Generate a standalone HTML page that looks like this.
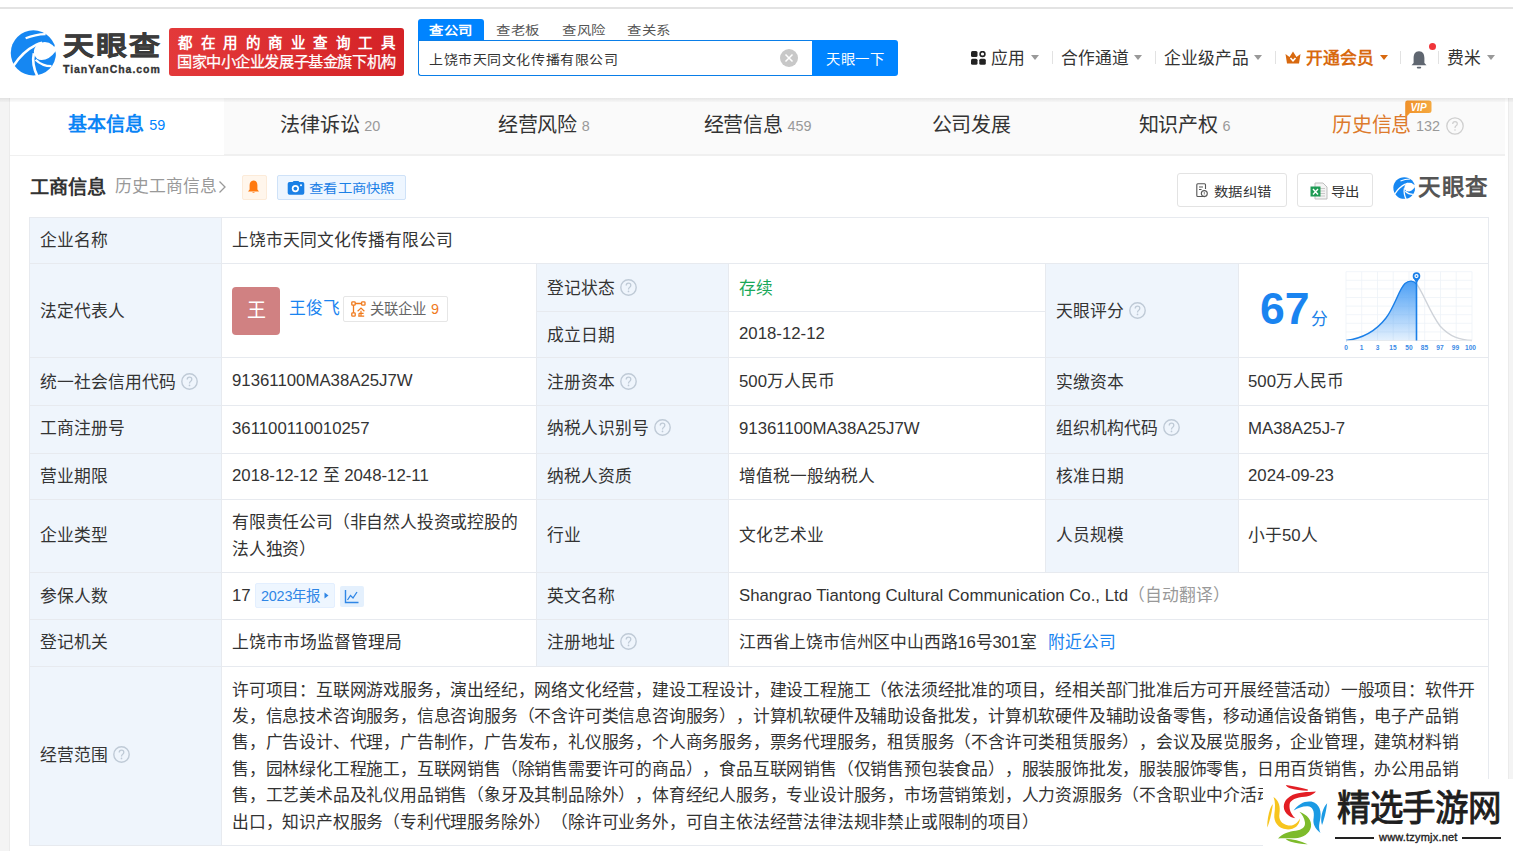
<!DOCTYPE html>
<html lang="zh-CN"><head><meta charset="utf-8">
<style>
*{box-sizing:border-box;margin:0;padding:0}
html,body{text-spacing-trim:space-all;width:1513px;height:851px;overflow:hidden;background:#f4f4f4;font-family:"Liberation Sans",sans-serif;color:#333}
.a{position:absolute;white-space:nowrap}
#top{position:absolute;left:0;top:0;width:1513px;height:98px;background:#fff}
#topline{position:absolute;left:0;top:7px;width:1513px;height:2px;background:#e3e3e3}
#shadow{position:absolute;left:0;top:98px;width:1513px;height:4px;z-index:5;background:linear-gradient(rgba(0,0,0,0.08),rgba(0,0,0,0.015))}
#card{position:absolute;left:10px;top:98px;width:1498px;height:760px;background:#fff}
#tabs{position:absolute;left:10px;top:98px;width:1495px;height:57px;background:#fafafa;border-bottom:1px solid #f0f0f0}
.tab{position:absolute;top:0;height:57px;width:213.6px;text-align:center;font-size:20px;letter-spacing:-0.3px;line-height:54px;color:#333}
.tab small{font-size:14.4px;color:#999;margin-left:5px;letter-spacing:0;position:relative;top:-1.5px}
.c{font-size:16.8px;color:#333}
.sc{font-size:16.8px;line-height:26.4px;color:#333;letter-spacing:-0.2px}
.nav{top:48px;font-size:16.8px;line-height:22px;color:#333}
.caret{top:55px;width:0;height:0;border-left:4.5px solid transparent;border-right:4.5px solid transparent;border-top:5px solid #999}
.sep{top:51px;width:1px;height:13px;background:#e2e2e2}
.q{display:inline-block;vertical-align:middle;margin-left:5.4px;position:relative;top:-2px}
</style></head><body>
<div id="top"></div>
<div id="topline"></div>
<div id="card"></div>

<!-- header -->
<svg class="a" style="left:8px;top:28px" width="52" height="50" viewBox="0 0 885 851">
  <circle cx="432" cy="425" r="385" fill="#1687f2"/>
  <ellipse cx="625" cy="405" rx="185" ry="165" fill="#fff"/>
  <path d="M770 320 L900 285 L900 425 L805 425 Z" fill="#fff"/>
  <path d="M470 520 Q650 610 812 395 Q810 570 690 625 Q570 665 470 520 Z" fill="#1687f2"/>
  <path d="M95 640 Q250 400 470 290 Q520 262 580 250" stroke="#fff" stroke-width="44" fill="none"/>
  <path d="M300 175 Q460 110 640 105" stroke="#fff" stroke-width="36" fill="none"/>
  <path d="M440 430 Q400 620 500 820" stroke="#fff" stroke-width="44" fill="none"/>
  <path d="M470 540 Q580 650 740 650" stroke="#fff" stroke-width="40" fill="none"/>
</svg>
<div class="a" style="left:63px;top:26px;font-size:31px;line-height:36px;font-weight:bold;color:#3b3b3b;letter-spacing:2px;transform:scaleY(0.83);-webkit-text-stroke:0.7px #3b3b3b;transform-origin:0 100%">天眼查</div>
<div class="a" style="left:63px;top:63px;font-size:10.5px;line-height:13px;font-weight:bold;color:#333;letter-spacing:0.95px;-webkit-text-stroke:0.3px #333">TianYanCha.com</div>
<div class="a" style="left:169px;top:28px;width:235px;height:48px;border-radius:3px;background:linear-gradient(90deg,#e3393a,#d42226)"></div>
<div class="a" style="left:178px;top:34px;font-size:14.5px;line-height:19px;font-weight:bold;color:#fff;letter-spacing:8.5px">都在用的商业查询工具</div>
<div class="a" style="left:177px;top:52px;font-size:15.2px;line-height:19px;color:#fff;letter-spacing:-0.42px;-webkit-text-stroke:0.25px #fff">国家中小企业发展子基金旗下机构</div>
<!-- search -->
<div class="a" style="left:418px;top:19px;width:66px;height:22px;background:#0084ff;border-radius:3px 3px 0 0"></div>
<div class="a" style="left:429px;top:19.5px;font-size:14.4px;line-height:21px;letter-spacing:0.5px;font-weight:bold;color:#fff;transform:scaleY(0.85);transform-origin:0 70%">查公司</div>
<div class="a" style="left:496px;top:19.5px;font-size:14.4px;line-height:21px;letter-spacing:0.5px;color:#555;transform:scaleY(0.85);transform-origin:0 70%">查老板</div>
<div class="a" style="left:562px;top:19.5px;font-size:14.4px;line-height:21px;letter-spacing:0.5px;color:#555;transform:scaleY(0.85);transform-origin:0 70%">查风险</div>
<div class="a" style="left:627px;top:19.5px;font-size:14.4px;line-height:21px;letter-spacing:0.5px;color:#555;transform:scaleY(0.85);transform-origin:0 70%">查关系</div>
<div class="a" style="left:418px;top:40px;width:400px;height:36px;border:1px solid #0a7ee8;border-right:none;border-radius:0 0 0 3px;background:#fff"></div>
<div class="a" style="left:429px;top:40.5px;font-size:14px;line-height:36px;color:#333;letter-spacing:0.58px;transform:scaleY(0.9);transform-origin:0 60%">上饶市天同文化传播有限公司</div>
<div class="a" style="left:780px;top:49px;width:18px;height:18px;border-radius:50%;background:#c8c8c8"></div>
<svg class="a" style="left:780px;top:49px" width="18" height="18" viewBox="0 0 18 18"><path d="M5.5 5.5L12.5 12.5M12.5 5.5L5.5 12.5" stroke="#fff" stroke-width="1.5"/></svg>
<div class="a" style="left:812px;top:40px;width:86px;height:36px;background:#0084ff;border-radius:0 3px 3px 0"></div><div class="a" style="left:826px;top:41px;font-size:14.4px;line-height:36px;color:#fff;letter-spacing:0.6px;transform:scaleY(0.92);transform-origin:0 60%">天眼一下</div>
<!-- right nav -->
<svg class="a" style="left:971px;top:51px" width="15" height="14" viewBox="0 0 15 14">
  <rect x="0" y="0" width="6.5" height="6" rx="1.5" fill="#222"/>
  <circle cx="11.5" cy="3" r="2.4" fill="none" stroke="#222" stroke-width="1.6"/>
  <rect x="0" y="7.8" width="6.5" height="6" rx="1.5" fill="#222"/>
  <rect x="8.3" y="7.8" width="6.5" height="6" rx="1.5" fill="#222"/>
</svg>
<div class="a nav" style="left:991px">应用</div>
<div class="a caret" style="left:1031px"></div>
<div class="a sep" style="left:1052px"></div>
<div class="a nav" style="left:1061px">合作通道</div>
<div class="a caret" style="left:1134px"></div>
<div class="a sep" style="left:1155px"></div>
<div class="a nav" style="left:1164px">企业级产品</div>
<div class="a caret" style="left:1254px"></div>
<div class="a sep" style="left:1275px"></div>
<svg class="a" style="left:1285px;top:51px" width="16" height="13" viewBox="0 0 16 13">
  <path d="M0.5 3 L4.5 6 L8 0.5 L11.5 6 L15.5 3 L14 12.5 L2 12.5 Z" fill="#d8690f"/>
  <path d="M5.5 7 L8 9.8 L10.5 7" stroke="#fff" stroke-width="1.6" fill="none"/>
</svg>
<div class="a nav" style="left:1306px;color:#d8690f;font-weight:bold">开通会员</div>
<div class="a caret" style="left:1380px;border-top-color:#d8690f"></div>
<div class="a sep" style="left:1400px"></div>
<svg class="a" style="left:1410px;top:50px" width="18" height="19" viewBox="0 0 18 19">
  <path d="M9 1.2 C5 1.2 3.6 4.5 3.6 8 L3.6 13 L1.5 15.2 L16.5 15.2 L14.4 13 L14.4 8 C14.4 4.5 13 1.2 9 1.2 Z" fill="#5f6670"/>
  <rect x="6.8" y="16.8" width="4.4" height="1.6" rx="0.8" fill="#5f6670"/>
</svg>
<div class="a" style="left:1429px;top:43px;width:7px;height:7px;border-radius:50%;background:#f0353a"></div>
<div class="a sep" style="left:1438px"></div>
<div class="a nav" style="left:1447px">费米</div>
<div class="a caret" style="left:1487px"></div>

<div id="shadow"></div>
<div class="a" style="left:10px;top:155px;width:1495px;height:1px;background:#f0f0f0;z-index:4"></div>
<div class="a" style="left:9px;top:98px;width:1px;height:753px;background:#ebebeb"></div>
<div class="a" style="left:1508px;top:98px;width:1px;height:753px;background:#ebebeb"></div>
<div id="tabs">
  <div class="tab" style="left:0;background:#fff;color:#0a84f5;font-weight:bold;font-size:19px;letter-spacing:0">基本信息<small style="color:#0084ff;font-weight:normal">59</small></div>
  <div class="tab" style="left:213.6px">法律诉讼<small>20</small></div>
  <div class="tab" style="left:427.1px">经营风险<small>8</small></div>
  <div class="tab" style="left:640.7px">经营信息<small>459</small></div>
  <div class="tab" style="left:854.3px">公司发展</div>
  <div class="tab" style="left:1067.9px">知识产权<small>6</small></div>
  <div class="tab" style="left:1281.4px;color:#dd7a2c">历史信息<small>132</small><svg style="display:inline-block;vertical-align:middle;margin-left:6px;position:relative;top:-1px" width="18" height="18" viewBox="0 0 18 18"><circle cx="9" cy="9" r="8.2" fill="none" stroke="#cfcfcf" stroke-width="1.3"/><path d="M6.7 7 Q6.7 4.6 9 4.6 Q11.3 4.6 11.3 6.7 Q11.3 8 10.1 8.7 Q9 9.4 9 10.9" fill="none" stroke="#cfcfcf" stroke-width="1.2"/><circle cx="9" cy="13" r="0.8" fill="#cfcfcf"/></svg></div>
</div>

<!-- table -->

<svg class="a" style="left:1404px;top:100px" width="28" height="19" viewBox="0 0 28 19">
  <defs><linearGradient id="vg" x1="0" y1="0" x2="1" y2="0"><stop offset="0" stop-color="#f0912a"/><stop offset="1" stop-color="#f5a940"/></linearGradient></defs>
  <path d="M3 0.5 L25 0.5 Q27.5 0.5 27.5 3 L27.5 11 Q27.5 13 25 13 L6 13 L1.2 18 L1.2 3 Q1.2 0.5 3 0.5 Z" fill="url(#vg)"/>
  <text x="14.5" y="10.6" font-family="Liberation Sans" font-size="10" font-weight="bold" font-style="italic" fill="#fff" text-anchor="middle">VIP</text>
</svg>
<!-- section header -->
<div class="a" style="left:30px;top:175px;font-size:19.2px;line-height:26px;font-weight:bold;color:#333">工商信息</div>
<div class="a" style="left:115px;top:174px;font-size:16.8px;line-height:26px;color:#999">历史工商信息</div>
<svg class="a" style="left:218px;top:180px" width="9" height="14" viewBox="0 0 9 14"><path d="M1.5 1.5L7 7L1.5 12.5" stroke="#999" stroke-width="1.3" fill="none"/></svg>
<div class="a" style="left:242px;top:175px;width:25px;height:25px;background:#fff6ec;border:1px solid #fcebd9;border-radius:2px"></div>
<svg class="a" style="left:247px;top:180px" width="13" height="14" viewBox="0 0 13 14">
  <path d="M6.5 0.4 C3.8 0.4 2.6 2.6 2.6 5.2 L2.6 9.6 L1 11.4 L12 11.4 L10.4 9.6 L10.4 5.2 C10.4 2.6 9.2 0.4 6.5 0.4 Z" fill="#ff7a10"/>
  <path d="M5 12 Q6.5 13.6 8 12 Z" fill="#ff7a10"/>
</svg>
<div class="a" style="left:277px;top:175px;width:129px;height:25px;background:#eef6ff;border:1px solid #cfe2f8;border-radius:2px"></div>
<svg class="a" style="left:287px;top:180px" width="18" height="16" viewBox="0 0 18 16">
  <path d="M2.5 2 L5.6 2 L6.6 0.9 L11.4 0.9 L12.4 2 L15.5 2 Q17.3 2 17.3 3.8 L17.3 13 Q17.3 14.8 15.5 14.8 L2.5 14.8 Q0.7 14.8 0.7 13 L0.7 3.8 Q0.7 2 2.5 2 Z" fill="#1a80e6"/>
  <circle cx="8.4" cy="8.6" r="3.6" fill="#fff"/>
  <circle cx="8.4" cy="8.6" r="1.9" fill="#1a80e6"/>
  <circle cx="14" cy="5.3" r="1" fill="#fff"/>
</svg>
<div class="a" style="left:309px;top:176px;font-size:14.4px;line-height:25px;color:#1a80e6;letter-spacing:0.3px;transform:scaleY(0.86);transform-origin:0 70%">查看工商快照</div>
<div class="a" style="left:1177px;top:173px;width:110px;height:34px;border:1px solid #e3e3e3;border-radius:3px;background:#fff"></div>
<svg class="a" style="left:1196px;top:183px" width="12" height="15" viewBox="0 0 12 15">
  <path d="M8.5 13.5 L1.8 13.5 Q0.8 13.5 0.8 12.5 L0.8 1.8 Q0.8 0.8 1.8 0.8 L8.5 0.8 Q9.5 0.8 9.5 1.8 L9.5 6" stroke="#555" stroke-width="1.1" fill="none"/>
  <path d="M3 4 L7 4 M3 6.5 L5.5 6.5" stroke="#555" stroke-width="1.1"/>
  <circle cx="8.3" cy="10.6" r="3" stroke="#555" stroke-width="1.1" fill="#fff"/>
  <path d="M8.3 9.2 L8.3 10.8 M8.3 11.6 L8.3 12.2" stroke="#555" stroke-width="0.9"/>
</svg>
<div class="a" style="left:1214px;top:174px;font-size:14.4px;line-height:34px;color:#333;letter-spacing:0.3px;transform:scaleY(0.9);transform-origin:0 60%">数据纠错</div>
<div class="a" style="left:1297px;top:173px;width:76px;height:34px;border:1px solid #e3e3e3;border-radius:3px;background:#fff"></div>
<svg class="a" style="left:1310px;top:182px" width="18" height="18" viewBox="0 0 18 18">
  <path d="M5 1 L13 1 L17 5 L17 17 L5 17 Z" fill="#f4f4f4" stroke="#bdbdbd" stroke-width="1"/>
  <path d="M9 6.5 L15 6.5 M9 9 L15 9 M9 11.5 L15 11.5 M9 14 L15 14" stroke="#c8c8c8" stroke-width="1"/>
  <rect x="0.5" y="4.5" width="10" height="10" fill="#1e9b54"/>
  <path d="M3 7 L8 12.5 M8 7 L3 12.5" stroke="#fff" stroke-width="1.4"/>
</svg>
<div class="a" style="left:1331px;top:174px;font-size:14.4px;line-height:34px;color:#333;letter-spacing:0.3px;transform:scaleY(0.9);transform-origin:0 60%">导出</div>
<svg class="a" style="left:1392px;top:176px" width="25" height="24" viewBox="0 0 885 851">
  <circle cx="432" cy="425" r="385" fill="#1687f2"/>
  <ellipse cx="625" cy="405" rx="185" ry="165" fill="#fff"/>
  <path d="M770 320 L900 285 L900 425 L805 425 Z" fill="#fff"/>
  <path d="M470 520 Q650 610 812 395 Q810 570 690 625 Q570 665 470 520 Z" fill="#1687f2"/>
  <path d="M95 640 Q250 400 470 290 Q520 262 580 250" stroke="#fff" stroke-width="44" fill="none"/>
  <path d="M300 175 Q460 110 640 105" stroke="#fff" stroke-width="36" fill="none"/>
  <path d="M440 430 Q400 620 500 820" stroke="#fff" stroke-width="44" fill="none"/>
  <path d="M470 540 Q580 650 740 650" stroke="#fff" stroke-width="40" fill="none"/>
</svg>
<div class="a" style="left:1418px;top:174px;font-size:22.5px;line-height:28px;font-weight:bold;color:#555;letter-spacing:0.5px">天眼查</div>
<div id="grid">
<div class="a" style="left:29px;top:217px;width:192px;height:629px;background:#eff5fc"></div>
<div class="a" style="left:536px;top:263px;width:192px;height:403px;background:#eff5fc"></div>
<div class="a" style="left:1045px;top:263px;width:193px;height:309px;background:#eff5fc"></div>
<div class="a" style="left:29px;top:217px;width:1460px;height:1px;background:#e7eaef"></div>
<div class="a" style="left:29px;top:263px;width:1460px;height:1px;background:#e7eaef"></div>
<div class="a" style="left:29px;top:357px;width:1460px;height:1px;background:#e7eaef"></div>
<div class="a" style="left:29px;top:405px;width:1460px;height:1px;background:#e7eaef"></div>
<div class="a" style="left:29px;top:453px;width:1460px;height:1px;background:#e7eaef"></div>
<div class="a" style="left:29px;top:499px;width:1460px;height:1px;background:#e7eaef"></div>
<div class="a" style="left:29px;top:572px;width:1460px;height:1px;background:#e7eaef"></div>
<div class="a" style="left:29px;top:619px;width:1460px;height:1px;background:#e7eaef"></div>
<div class="a" style="left:29px;top:666px;width:1460px;height:1px;background:#e7eaef"></div>
<div class="a" style="left:29px;top:845px;width:1460px;height:1px;background:#e7eaef"></div>
<div class="a" style="left:536px;top:311px;width:510px;height:1px;background:#e7eaef"></div>
<div class="a" style="left:29px;top:217px;width:1px;height:629px;background:#e7eaef"></div>
<div class="a" style="left:221px;top:217px;width:1px;height:629px;background:#e7eaef"></div>
<div class="a" style="left:1488px;top:217px;width:1px;height:629px;background:#e7eaef"></div>
<div class="a" style="left:536px;top:263px;width:1px;height:404px;background:#e7eaef"></div>
<div class="a" style="left:728px;top:263px;width:1px;height:404px;background:#e7eaef"></div>
<div class="a" style="left:1045px;top:263px;width:1px;height:310px;background:#e7eaef"></div>
<div class="a" style="left:1238px;top:263px;width:1px;height:310px;background:#e7eaef"></div>
</div>
<div id="cells">
<div class="a c" style="left:40px;top:217.5px;height:46px;line-height:46px;">企业名称</div>
<div class="a c" style="left:40px;top:264.5px;height:94px;line-height:94px;">法定代表人</div>
<div class="a c" style="left:40px;top:358.5px;height:48px;line-height:48px;">统一社会信用代码<svg class="q" width="17" height="17" viewBox="0 0 17 17"><circle cx="8.5" cy="8.5" r="7.7" fill="none" stroke="#bfcad6" stroke-width="1.4"/><path d="M6.2 6.5 Q6.2 4.2 8.5 4.2 Q10.8 4.2 10.8 6.3 Q10.8 7.5 9.7 8.2 Q8.5 8.9 8.5 10.4" fill="none" stroke="#bfcad6" stroke-width="1.3"/><circle cx="8.5" cy="12.4" r="0.85" fill="#bfcad6"/></svg></div>
<div class="a c" style="left:40px;top:405px;height:48px;line-height:48px;">工商注册号</div>
<div class="a c" style="left:40px;top:454px;height:46px;line-height:46px;">营业期限</div>
<div class="a c" style="left:40px;top:499px;height:73px;line-height:73px;">企业类型</div>
<div class="a c" style="left:40px;top:573px;height:47px;line-height:47px;">参保人数</div>
<div class="a c" style="left:40px;top:619px;height:47px;line-height:47px;">登记机关</div>
<div class="a c" style="left:40px;top:666px;height:179px;line-height:179px;">经营范围<svg class="q" width="17" height="17" viewBox="0 0 17 17"><circle cx="8.5" cy="8.5" r="7.7" fill="none" stroke="#bfcad6" stroke-width="1.4"/><path d="M6.2 6.5 Q6.2 4.2 8.5 4.2 Q10.8 4.2 10.8 6.3 Q10.8 7.5 9.7 8.2 Q8.5 8.9 8.5 10.4" fill="none" stroke="#bfcad6" stroke-width="1.3"/><circle cx="8.5" cy="12.4" r="0.85" fill="#bfcad6"/></svg></div>
<div class="a c" style="left:232px;top:217.5px;height:46px;line-height:46px;">上饶市天同文化传播有限公司</div>
<div class="a c" style="left:232px;top:357px;height:48px;line-height:48px;">91361100MA38A25J7W</div>
<div class="a c" style="left:232px;top:405px;height:48px;line-height:48px;">361100110010257</div>
<div class="a c" style="left:232px;top:453px;height:46px;line-height:46px;">2018-12-12 至 2048-12-11</div>
<div class="a" style="left:232px;top:509px;line-height:27px;font-size:16.8px;letter-spacing:-0.2px">有限责任公司（非自然人投资或控股的<br>法人独资）</div>
<div class="a c" style="left:232px;top:619px;height:47px;line-height:47px;">上饶市市场监督管理局</div>
<div class="a c" style="left:547px;top:264.5px;height:48px;line-height:48px;">登记状态<svg class="q" width="17" height="17" viewBox="0 0 17 17"><circle cx="8.5" cy="8.5" r="7.7" fill="none" stroke="#bfcad6" stroke-width="1.4"/><path d="M6.2 6.5 Q6.2 4.2 8.5 4.2 Q10.8 4.2 10.8 6.3 Q10.8 7.5 9.7 8.2 Q8.5 8.9 8.5 10.4" fill="none" stroke="#bfcad6" stroke-width="1.3"/><circle cx="8.5" cy="12.4" r="0.85" fill="#bfcad6"/></svg></div>
<div class="a c" style="left:547px;top:312.5px;height:46px;line-height:46px;">成立日期</div>
<div class="a c" style="left:547px;top:358.5px;height:48px;line-height:48px;">注册资本<svg class="q" width="17" height="17" viewBox="0 0 17 17"><circle cx="8.5" cy="8.5" r="7.7" fill="none" stroke="#bfcad6" stroke-width="1.4"/><path d="M6.2 6.5 Q6.2 4.2 8.5 4.2 Q10.8 4.2 10.8 6.3 Q10.8 7.5 9.7 8.2 Q8.5 8.9 8.5 10.4" fill="none" stroke="#bfcad6" stroke-width="1.3"/><circle cx="8.5" cy="12.4" r="0.85" fill="#bfcad6"/></svg></div>
<div class="a c" style="left:547px;top:405px;height:48px;line-height:48px;">纳税人识别号<svg class="q" width="17" height="17" viewBox="0 0 17 17"><circle cx="8.5" cy="8.5" r="7.7" fill="none" stroke="#bfcad6" stroke-width="1.4"/><path d="M6.2 6.5 Q6.2 4.2 8.5 4.2 Q10.8 4.2 10.8 6.3 Q10.8 7.5 9.7 8.2 Q8.5 8.9 8.5 10.4" fill="none" stroke="#bfcad6" stroke-width="1.3"/><circle cx="8.5" cy="12.4" r="0.85" fill="#bfcad6"/></svg></div>
<div class="a c" style="left:547px;top:454px;height:46px;line-height:46px;">纳税人资质</div>
<div class="a c" style="left:547px;top:499px;height:73px;line-height:73px;">行业</div>
<div class="a c" style="left:547px;top:573px;height:47px;line-height:47px;">英文名称</div>
<div class="a c" style="left:547px;top:619px;height:47px;line-height:47px;">注册地址<svg class="q" width="17" height="17" viewBox="0 0 17 17"><circle cx="8.5" cy="8.5" r="7.7" fill="none" stroke="#bfcad6" stroke-width="1.4"/><path d="M6.2 6.5 Q6.2 4.2 8.5 4.2 Q10.8 4.2 10.8 6.3 Q10.8 7.5 9.7 8.2 Q8.5 8.9 8.5 10.4" fill="none" stroke="#bfcad6" stroke-width="1.3"/><circle cx="8.5" cy="12.4" r="0.85" fill="#bfcad6"/></svg></div>
<div class="a c" style="left:739px;top:264.5px;height:48px;line-height:48px;color:#1aa85a">存续</div>
<div class="a c" style="left:739px;top:311px;height:46px;line-height:46px;">2018-12-12</div>
<div class="a c" style="left:739px;top:357.5px;height:48px;line-height:48px;">500万人民币</div>
<div class="a c" style="left:739px;top:405px;height:48px;line-height:48px;">91361100MA38A25J7W</div>
<div class="a c" style="left:739px;top:454px;height:46px;line-height:46px;">增值税一般纳税人</div>
<div class="a c" style="left:739px;top:499px;height:73px;line-height:73px;">文化艺术业</div>
<div class="a c" style="left:739px;top:572px;height:47px;line-height:47px;">Shangrao Tiantong Cultural Communication Co., Ltd<span style="color:#999">（自动翻译）</span></div>
<div class="a c" style="left:739px;top:619px;height:47px;line-height:47px;letter-spacing:-0.2px">江西省上饶市信州区中山西路16号301室</div><div class="a c" style="left:1048px;top:619px;height:47px;line-height:47px;color:#1a84f0">附近公司</div>
<div class="a c" style="left:1056px;top:264.5px;height:94px;line-height:94px;">天眼评分<svg class="q" width="17" height="17" viewBox="0 0 17 17"><circle cx="8.5" cy="8.5" r="7.7" fill="none" stroke="#bfcad6" stroke-width="1.4"/><path d="M6.2 6.5 Q6.2 4.2 8.5 4.2 Q10.8 4.2 10.8 6.3 Q10.8 7.5 9.7 8.2 Q8.5 8.9 8.5 10.4" fill="none" stroke="#bfcad6" stroke-width="1.3"/><circle cx="8.5" cy="12.4" r="0.85" fill="#bfcad6"/></svg></div>
<div class="a c" style="left:1056px;top:358.5px;height:48px;line-height:48px;">实缴资本</div>
<div class="a c" style="left:1056px;top:405px;height:48px;line-height:48px;">组织机构代码<svg class="q" width="17" height="17" viewBox="0 0 17 17"><circle cx="8.5" cy="8.5" r="7.7" fill="none" stroke="#bfcad6" stroke-width="1.4"/><path d="M6.2 6.5 Q6.2 4.2 8.5 4.2 Q10.8 4.2 10.8 6.3 Q10.8 7.5 9.7 8.2 Q8.5 8.9 8.5 10.4" fill="none" stroke="#bfcad6" stroke-width="1.3"/><circle cx="8.5" cy="12.4" r="0.85" fill="#bfcad6"/></svg></div>
<div class="a c" style="left:1056px;top:454px;height:46px;line-height:46px;">核准日期</div>
<div class="a c" style="left:1056px;top:499px;height:73px;line-height:73px;">人员规模</div>
<div class="a c" style="left:1248px;top:357.5px;height:48px;line-height:48px;">500万人民币</div>
<div class="a c" style="left:1248px;top:405px;height:48px;line-height:48px;">MA38A25J-7</div>
<div class="a c" style="left:1248px;top:453px;height:46px;line-height:46px;">2024-09-23</div>
<div class="a c" style="left:1248px;top:499px;height:73px;line-height:73px;">小于50人</div>
<div class="a sc" style="left:232px;top:678px">许可项目：互联网游戏服务，演出经纪，网络文化经营，建设工程设计，建设工程施工（依法须经批准的项目，经相关部门批准后方可开展经营活动）一般项目：软件开</div>
<div class="a sc" style="left:232px;top:704px">发，信息技术咨询服务，信息咨询服务（不含许可类信息咨询服务），计算机软硬件及辅助设备批发，计算机软硬件及辅助设备零售，移动通信设备销售，电子产品销</div>
<div class="a sc" style="left:232px;top:730px">售，广告设计、代理，广告制作，广告发布，礼仪服务，个人商务服务，票务代理服务，租赁服务（不含许可类租赁服务），会议及展览服务，企业管理，建筑材料销</div>
<div class="a sc" style="left:232px;top:757px">售，园林绿化工程施工，互联网销售（除销售需要许可的商品），食品互联网销售（仅销售预包装食品），服装服饰批发，服装服饰零售，日用百货销售，办公用品销</div>
<div class="a sc" style="left:232px;top:783px">售，工艺美术品及礼仪用品销售（象牙及其制品除外），体育经纪人服务，专业设计服务，市场营销策划，人力资源服务（不含职业中介活动、劳务派遣服务），货物进</div>
<div class="a sc" style="left:232px;top:810px">出口，知识产权服务（专利代理服务除外）（除许可业务外，可自主依法经营法律法规非禁止或限制的项目）</div>
</div>

<!-- legal rep -->
<div class="a" style="left:232px;top:287px;width:48px;height:48px;border-radius:4px;background:#d08182;color:#fff;font-size:19px;line-height:48px;text-align:center">王</div>
<div class="a" style="left:289px;top:298px;font-size:16.8px;line-height:22px;color:#1a84f0">王俊飞</div>
<div class="a" style="left:343px;top:296px;width:105px;height:26px;border:1px solid #e6e6e6;border-radius:2px;background:#fff"></div>
<svg class="a" style="left:351px;top:301px" width="15" height="16" viewBox="0 0 15 16">
  <rect x="0.8" y="0.8" width="3.4" height="3.4" rx="0.8" fill="none" stroke="#f07a1c" stroke-width="1.3"/>
  <rect x="10.6" y="0.8" width="3.4" height="3.4" rx="0.8" fill="none" stroke="#f07a1c" stroke-width="1.3"/>
  <rect x="0.8" y="11.8" width="3.4" height="3.4" rx="0.8" fill="none" stroke="#f07a1c" stroke-width="1.3"/>
  <path d="M4.2 2.5 L10.6 2.5 M2.5 4.2 L2.5 11.8" stroke="#f07a1c" stroke-width="1.3"/>
  <path d="M6.6 10.2 L10 7 L13.4 10.2 M10 9.8 V15.2 M8 12.3 H12.6 M7.2 15.2 H13.2 M8 12.3 V15.2" stroke="#f07a1c" stroke-width="1.2" fill="none"/>
</svg>
<div class="a" style="left:370px;top:296px;font-size:14.4px;line-height:26px;color:#666">关联企业</div>
<div class="a" style="left:431px;top:296px;font-size:14.4px;line-height:26px;color:#f07a1c">9</div>
<!-- score -->
<div class="a" style="left:1260px;top:284px;font-size:44.5px;line-height:50px;font-weight:bold;color:#1a84f0">67</div>
<div class="a" style="left:1311px;top:309px;font-size:16.8px;line-height:22px;color:#1a7fe8">分</div>
<svg class="a" style="left:1340px;top:268px" width="140" height="85" viewBox="1340 268 140 85">
  <defs><linearGradient id="gf" x1="0" y1="0" x2="0" y2="1"><stop offset="0" stop-color="#4b9ff5"/><stop offset="1" stop-color="#4b9ff5" stop-opacity="0.15"/></linearGradient></defs>
  <g stroke="#eef2f7" stroke-width="0.8">
    <path d="M1346 271.7V340.5M1361.7 271.7V340.5M1377.5 271.7V340.5M1393.2 271.7V340.5M1409 271.7V340.5M1424.7 271.7V340.5M1440.5 271.7V340.5M1456.2 271.7V340.5M1472 271.7V340.5"/>
    <path d="M1346 271.7H1472M1346 280.3H1472M1346 288.9H1472M1346 297.5H1472M1346 306.1H1472M1346 314.7H1472M1346 323.3H1472M1346 331.9H1472"/>
  </g>
  <path d="M1346 340.5 C1362 338.5 1376 331 1386 318 C1395 306 1399 289 1405 283.5 C1409 280 1414 280.5 1416.5 284 L1416.5 340.5 Z" fill="url(#gf)"/>
  <path d="M1346 340.5 C1362 338.5 1376 331 1386 318 C1395 306 1399 289 1405 283.5 C1409 280 1414 280.5 1416.5 284" fill="none" stroke="#1a7fe8" stroke-width="1.4"/>
  <path d="M1416.5 284 C1423 292 1429 311 1440 326 C1450 337 1460 340 1472 340.5" fill="none" stroke="#cfd3d9" stroke-width="1.3"/>
  <path d="M1346 340.5 H1472" stroke="#e2e6eb" stroke-width="0.8"/>
  <path d="M1416.5 280 V340.5" stroke="#1a7fe8" stroke-width="1.6"/>
  <path d="M1413.2 277.8 L1416.5 283.2 L1419.8 277.8 Z" fill="#1a7fe8"/>
  <circle cx="1416.5" cy="276.1" r="3.8" fill="#1a7fe8"/>
  <circle cx="1416.5" cy="276.1" r="2.1" fill="#fff"/>
  <circle cx="1416.5" cy="276.1" r="0.9" fill="#1a7fe8"/>
  <g font-family="Liberation Sans" font-size="6.6" font-weight="bold" fill="#3a8ae6" text-anchor="middle">
    <text x="1346" y="349.5">0</text><text x="1361.5" y="349.5">1</text><text x="1377.5" y="349.5">3</text><text x="1393" y="349.5">15</text><text x="1409" y="349.5">50</text><text x="1424.5" y="349.5">85</text><text x="1440" y="349.5">97</text><text x="1455.5" y="349.5">99</text><text x="1470.5" y="349.5">100</text>
  </g>
</svg>
<!-- insured -->
<div class="a" style="left:232px;top:585px;font-size:16.8px;line-height:22px;color:#333">17</div>
<div class="a" style="left:255px;top:583px;width:80px;height:25px;background:#eef6ff;border:1px solid #e3efff;border-radius:2px"></div>
<div class="a" style="left:261px;top:584px;font-size:14.4px;line-height:25px;color:#2f86e6;letter-spacing:-0.2px">2023年报</div>
<svg class="a" style="left:324px;top:592px" width="5" height="7" viewBox="0 0 5 7"><path d="M0.5 0.5 L4.5 3.5 L0.5 6.5 Z" fill="#2f86e6"/></svg>
<div class="a" style="left:340px;top:586px;width:24px;height:21px;background:#e4f0fd;border-radius:2px"></div>
<svg class="a" style="left:344px;top:589px" width="16" height="15" viewBox="0 0 16 15">
  <path d="M1.5 1 V13.5 H14.5" fill="none" stroke="#2f86e6" stroke-width="1.4"/>
  <path d="M3.5 11 L6.5 6.5 L9 9 L13 3" fill="none" stroke="#2f86e6" stroke-width="1.3"/>
</svg>

<!-- watermark -->
<div class="a" style="left:1263px;top:779px;width:250px;height:72px;background:#fff"></div>
<svg class="a" style="left:1262px;top:780px" width="70" height="70" viewBox="0 0 851 851">
  <path d="M655 140 C560 150 430 140 340 200 C260 250 240 340 300 410 C330 445 370 460 405 465 C350 410 330 360 335 300 C340 240 420 215 520 205 C590 195 630 170 655 140 Z" fill="#e31e24"/>
  <path d="M290 62 C360 70 460 90 558 115 L555 130 C470 130 400 120 340 100 C310 90 295 75 290 62 Z" fill="#e31e24"/>
  <path d="M385 372 C440 290 520 250 600 262 C700 280 730 390 705 490 C690 560 690 600 712 645 C640 590 615 530 628 460 C640 380 615 325 555 320 C495 318 440 340 385 372 Z" fill="#1b9ae4"/>
  <path d="M792 282 C780 360 770 440 730 548 C712 500 720 420 745 360 C760 320 775 300 792 282 Z" fill="#1b9ae4"/>
  <path d="M455 385 C550 420 610 490 595 570 C580 650 500 700 400 708 C320 712 250 705 195 712 C250 650 330 628 410 618 C490 605 530 575 522 515 C515 460 490 420 455 385 Z" fill="#7dbb2b"/>
  <path d="M288 715 C370 720 470 740 555 782 C500 785 420 768 350 752 C315 742 295 728 288 715 Z" fill="#7dbb2b"/>
  <path d="M140 208 C210 255 225 330 212 410 C200 480 235 535 320 552 C390 562 430 520 462 468 C455 560 390 605 300 600 C195 590 140 510 150 420 C160 340 165 270 140 208 Z" fill="#f7c51e"/>
  <path d="M132 295 C120 380 105 470 65 578 C60 520 75 420 100 350 C110 325 120 305 132 295 Z" fill="#f7c51e"/>
</svg>
<div class="a" style="left:1337px;top:781px;font-size:33.5px;line-height:50px;color:#1e1e1e;letter-spacing:-0.3px;font-weight:500;transform:scaleY(1.1);transform-origin:0 0;-webkit-text-stroke:0.9px #1e1e1e">精选手游网</div>
<div class="a" style="left:1335px;top:837px;width:39px;height:2px;background:#222"></div>
<div class="a" style="left:1462px;top:837px;width:39px;height:2px;background:#222"></div>
<div class="a" style="left:1379px;top:830px;font-size:11px;line-height:14px;color:#222;letter-spacing:0.2px;-webkit-text-stroke:0.35px #222">www.tzymjx.net</div>
</body></html>
